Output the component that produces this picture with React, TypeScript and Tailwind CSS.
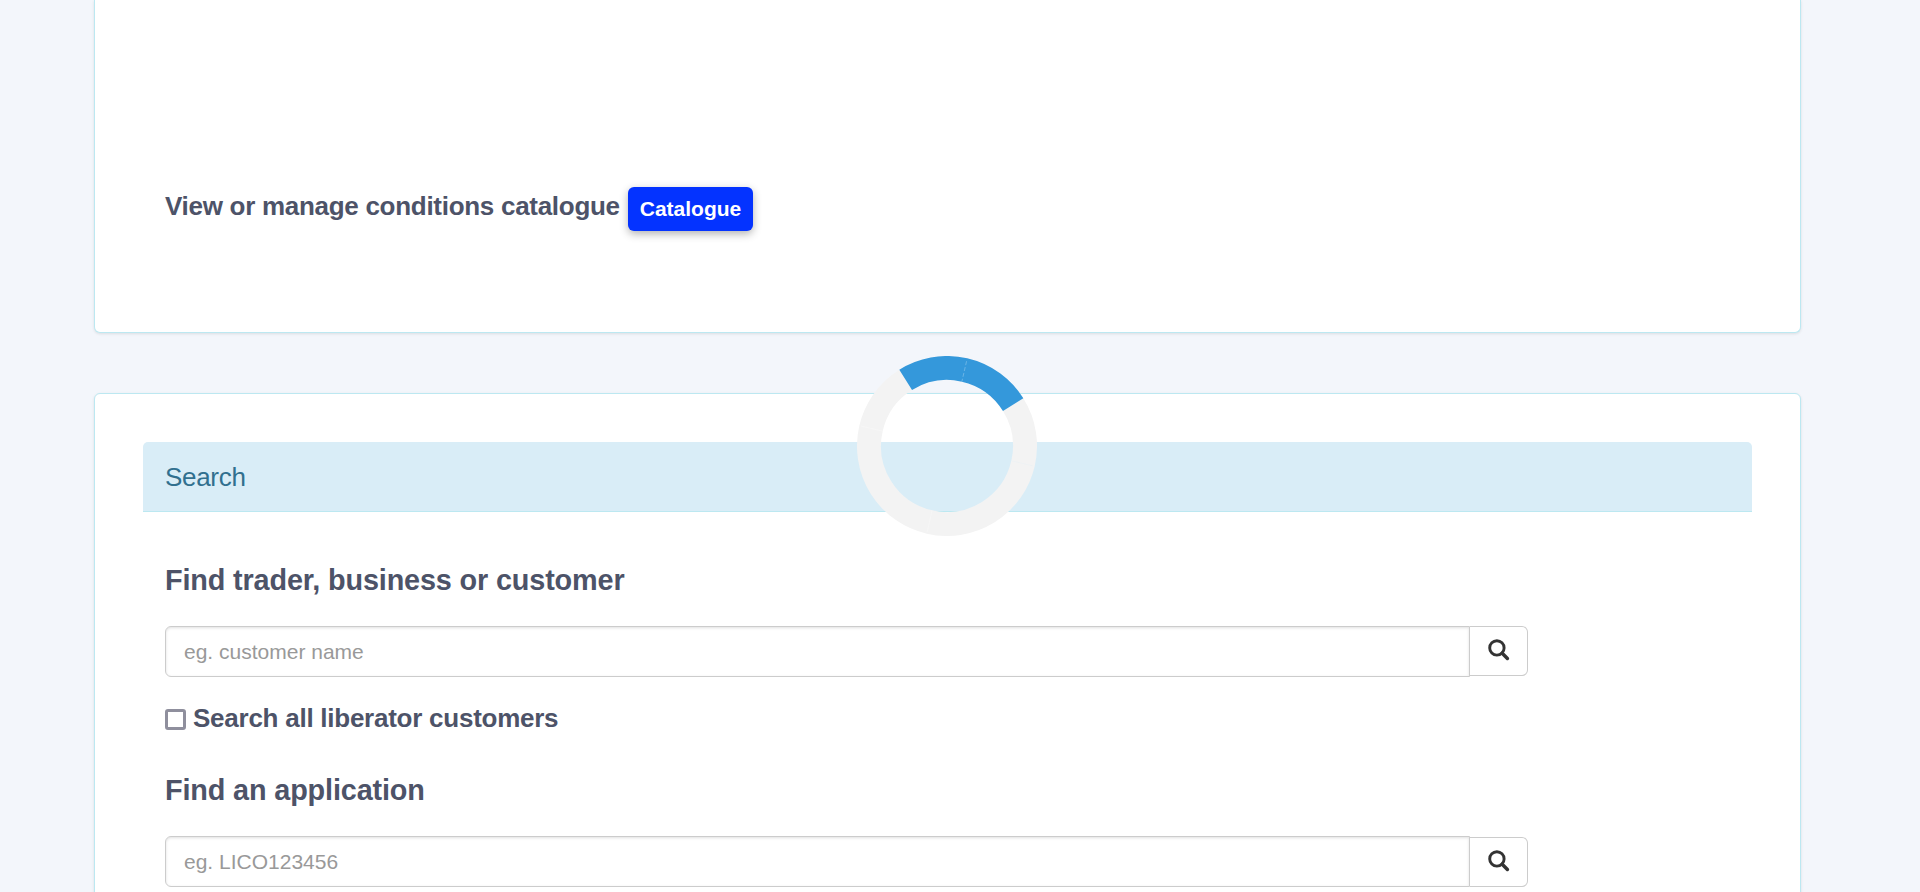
import React from "react";

function SearchIcon() {
  return (
    <svg width="22" height="22" viewBox="0 0 22 22" fill="none" stroke="#333333" className="-mt-[2px]">
      <circle cx="8.9" cy="8.9" r="7.2" strokeWidth="2.9" />
      <path d="M14.2 14.2l5.2 5.2" strokeWidth="3.5" strokeLinecap="round" />
    </svg>
  );
}

function Spinner() {
  return (
    <svg
      className="fixed left-[857px] top-[356px]"
      width="180"
      height="180"
      viewBox="-90 -90 180 180"
      fill="none"
    >
      <g transform="rotate(13)">
        <circle r="78" stroke="#f3f3f3" strokeWidth="24" />
        <path d="M-55.154 -55.154A78 78 0 0 1 55.154 -55.154" stroke="#3498db" strokeWidth="24" />
        <path d="M0 -87V-66" stroke="#fff" strokeOpacity=".35" strokeDasharray="4 2" strokeWidth="0.7" />
        <path d="M0 66V88M-88 0H-66" stroke="#fff" strokeOpacity=".4" strokeWidth="0.6" />
        <path d="M66 0H88" stroke="#d9edf7" strokeOpacity=".35" strokeWidth="0.6" />
      </g>
    </svg>
  );
}

type SearchFieldProps = { label: string; placeholder: string; buttonClass: string };

function SearchField({ label, placeholder, buttonClass }: SearchFieldProps) {
  return (
    <div className="flex h-[51px] w-[1363px]">
      <input
        aria-label={label}
        placeholder={placeholder}
        className="h-[51px] w-[1305px] rounded-l-[6px] border border-[#cccccc] bg-white px-[18px] text-[21px] text-[#555555] shadow-[inset_0_1px_3px_rgba(0,0,0,0.12)] outline-none placeholder:text-[#999999]"
      />
      <button
        aria-label={label}
        className={`flex h-[50px] w-[58px] items-center justify-center rounded-r-[6px] border border-l-0 border-[#cccccc] bg-white ${buttonClass}`}
      >
        <SearchIcon />
      </button>
    </div>
  );
}

export default function App() {
  return (
    <div className="h-[892px] overflow-hidden bg-[#f3f6fb] pl-[94px] font-['Liberation_Sans',Arial,sans-serif] text-[#4d5368]">
      <section className="h-[333px] w-[1707px] rounded-b-[6px] border border-t-0 border-[#bce8f1] bg-white pl-[70px] pt-[187px] shadow-[0_1px_3px_rgba(0,0,0,0.1)]">
        <div className="flex items-start">
          <h4 className="w-[463px] whitespace-nowrap pt-[3px] text-[26px] font-bold leading-[32px] tracking-[-0.285px]">
            View or manage conditions catalogue
          </h4>
          <button className="h-[44px] w-[125px] rounded-[6px] bg-[#0433ff] text-[21px] font-bold leading-[44px] text-white shadow-[0_3px_8px_rgba(0,0,0,0.3)]">
            Catalogue
          </button>
        </div>
      </section>

      <section className="mt-[60px] h-[560px] w-[1707px] rounded-t-[6px] border border-[#bce8f1] bg-white p-12 shadow-[0_1px_3px_rgba(0,0,0,0.1)]">
        <header className="h-[70px] w-[1609px] rounded-t-[5px] border-b border-[#bce8f1] bg-[#d9edf7] pl-[22px] text-[26px] leading-[70px] tracking-[-0.3px] text-[#31708f]">
          Search
        </header>
        <div className="pl-[22px] pt-[50px]">
          <h3 className="h-16 text-[28.8px] font-bold leading-[36px] tracking-[-0.14px]">
            Find trader, business or customer
          </h3>
          <SearchField label="Find customer" placeholder="eg. customer name" buttonClass="" />
          <label className="mt-6 flex h-[36px] items-center">
            <input
              type="checkbox"
              className="mr-[7px] mt-[1px] h-[21px] w-[21px] appearance-none rounded-[3px] border-[3px] border-[#8f8f9d] bg-white"
            />
            <span className="-mt-[2px] text-[26px] font-bold leading-[36px] tracking-[-0.25px]">
              Search all liberator customers
            </span>
          </label>
          <h3 className="mt-[35px] h-16 text-[28.8px] font-bold leading-[36px] tracking-[-0.14px]">
            Find an application
          </h3>
          <SearchField label="Find application" placeholder="eg. LICO123456" buttonClass="mt-px" />
        </div>
      </section>
      <Spinner />
    </div>
  );
}
